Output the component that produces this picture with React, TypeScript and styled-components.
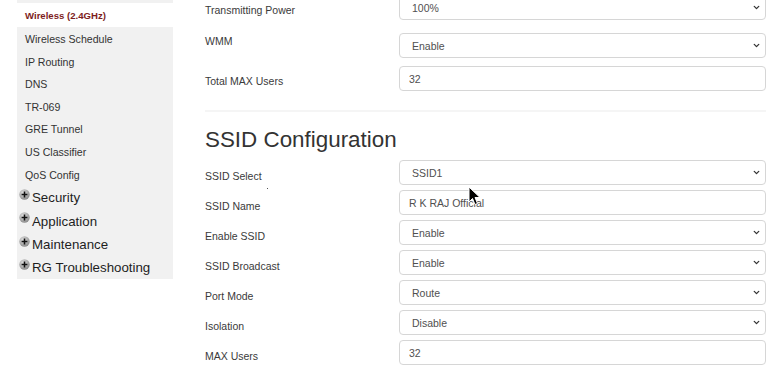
import React from 'react'
import styled, { createGlobalStyle } from 'styled-components'
import { ChevronDown } from 'lucide-react'

const GlobalStyle = createGlobalStyle`
    html, body {
        margin: 0;
        padding: 0;
        background: #ffffff;
        font-family: "Liberation Sans", Arial, sans-serif;
    }
    * {
        box-sizing: border-box;
    }
`

const Page = styled.div`
    position: relative;
    display: flex;
    align-items: flex-start;
    width: 778px;
    height: 365px;
    overflow: hidden;
`

const Sidebar = styled.nav`
    margin-left: 17px;
    width: 156px;
    padding-top: 3px;
    background: #f1f1f1;
    display: flex;
    flex-direction: column;
`

const ActiveItem = styled.div`
    height: 24px;
    margin-bottom: 1px;
    line-height: 25px;
    padding-left: 8px;
    background: #ffffff;
    color: #7d1d1d;
    font-size: 9.6px;
    font-weight: bold;
`

const SubItem = styled.div`
    height: 22.6px;
    line-height: 22.6px;
    padding-left: 8px;
    color: #333333;
    font-size: 10.6px;
`

const GroupItem = styled.div`
    height: 23.3px;
    display: flex;
    align-items: center;
    padding-left: 2px;
    color: #1e1e1e;
    font-size: 13.3px;
`

const PlusIcon = styled.svg`
    align-self: flex-start;
    margin-top: 3px;
    margin-right: 2px;
    flex-shrink: 0;
`

const Main = styled.main`
    margin-left: 32px;
    margin-top: -5px;
    width: 561px;
    display: flex;
    flex-direction: column;
`

const FormRow = styled.div<{ $gap: number }>`
    display: grid;
    grid-template-columns: 194px 367px;
    align-items: start;
    margin-top: ${p => p.$gap}px;
`

const Label = styled.div<{ $offset: number }>`
    padding-top: ${p => p.$offset}px;
    line-height: 16px;
    font-size: 10.5px;
    color: #3a3a3a;
`

const fieldBox = `
    height: 25px;
    width: 367px;
    border: 1px solid #d6d6d6;
    border-radius: 4px;
    background: #ffffff;
    font-family: "Liberation Sans", Arial, sans-serif;
    font-size: 10.5px;
    color: #505050;
`

const TextInput = styled.input`
    ${fieldBox}
    padding: 0 0 0 9px;
    outline: none;
`

const SelectBox = styled.div`
    ${fieldBox}
    display: flex;
    align-items: center;
    justify-content: space-between;
    padding: 0 4px 0 12px;
`

const Rule = styled.div`
    margin-top: 19px;
    height: 2px;
    background: #f5f5f5;
`

const Heading = styled.h2`
    margin: 15px 0 0 0;
    height: 26px;
    line-height: 26px;
    font-size: 22.4px;
    font-weight: normal;
    color: #333333;
`

const Pointer = styled.svg`
    position: absolute;
    left: 468px;
    top: 186px;
`

const Speck = styled.div`
    position: absolute;
    left: 267px;
    top: 188px;
    width: 1px;
    height: 1px;
    background: #555555;
`

const Plus = () => (
    <PlusIcon width="11" height="11" viewBox="0 0 11 11">
        <defs>
            <radialGradient id="plusBall" cx="40%" cy="35%" r="65%">
                <stop offset="0%" stopColor="#e6e6e6" />
                <stop offset="100%" stopColor="#8c8c8c" />
            </radialGradient>
        </defs>
        <circle cx="5.5" cy="5.5" r="5.2" fill="url(#plusBall)" />
        <path d="M5.5 2.6v5.8M2.6 5.5h5.8" stroke="#111111" strokeWidth="1.6" />
    </PlusIcon>
)

const Select = ({ value }: { value: string }) => (
    <SelectBox>
        <span>{value}</span>
        <ChevronDown size={9} strokeWidth={3.5} color="#333333" />
    </SelectBox>
)

interface FieldProps {
    label: string;
    value: string;
    kind: 'select' | 'text';
    gap: number;
    offset: number;
}

const Field = ({ label, value, kind, gap, offset }: FieldProps) => (
    <FormRow $gap={gap}>
        <Label $offset={offset}>{label}</Label>
        {kind === 'select' ? <Select value={value} /> : <TextInput readOnly value={value} />}
    </FormRow>
)

const subItems = ['Wireless Schedule', 'IP Routing', 'DNS', 'TR-069', 'GRE Tunnel', 'US Classifier', 'QoS Config']
const groups = ['Security', 'Application', 'Maintenance', 'RG Troubleshooting']

const ssidFields: { label: string; value: string; kind: 'select' | 'text' }[] = [
    { label: 'SSID Select', value: 'SSID1', kind: 'select' },
    { label: 'SSID Name', value: 'R K RAJ Official', kind: 'text' },
    { label: 'Enable SSID', value: 'Enable', kind: 'select' },
    { label: 'SSID Broadcast', value: 'Enable', kind: 'select' },
    { label: 'Port Mode', value: 'Route', kind: 'select' },
    { label: 'Isolation', value: 'Disable', kind: 'select' },
    { label: 'MAX Users', value: '32', kind: 'text' },
]

export default function App() {
    return (
        <>
            <GlobalStyle />
            <Page>
                <Sidebar>
                    <ActiveItem>Wireless (2.4GHz)</ActiveItem>
                    {subItems.map(item => (
                        <SubItem key={item}>{item}</SubItem>
                    ))}
                    {groups.map(group => (
                        <GroupItem key={group}>
                            <Plus />
                            {group}
                        </GroupItem>
                    ))}
                </Sidebar>
                <Main>
                    <Field label="Transmitting Power" value="100%" kind="select" gap={0} offset={7} />
                    <Field label="WMM" value="Enable" kind="select" gap={13} offset={0} />
                    <Field label="Total MAX Users" value="32" kind="text" gap={8} offset={7} />
                    <Rule />
                    <Heading>SSID Configuration</Heading>
                    {ssidFields.map((f, i) => (
                        <Field key={f.label} label={f.label} value={f.value} kind={f.kind} gap={i === 0 ? 7 : 5} offset={7.5} />
                    ))}
                </Main>
                <Speck />
                <Pointer width="13" height="20" viewBox="0 0 13 20">
                    <path d="M1 1 L1 16 L4.5 12.5 L7 18.5 L9.5 17.5 L7 11.5 L12 11.5 Z" fill="#000000" stroke="#ffffff" strokeWidth="1" strokeLinejoin="round" />
                </Pointer>
            </Page>
        </>
    )
}
